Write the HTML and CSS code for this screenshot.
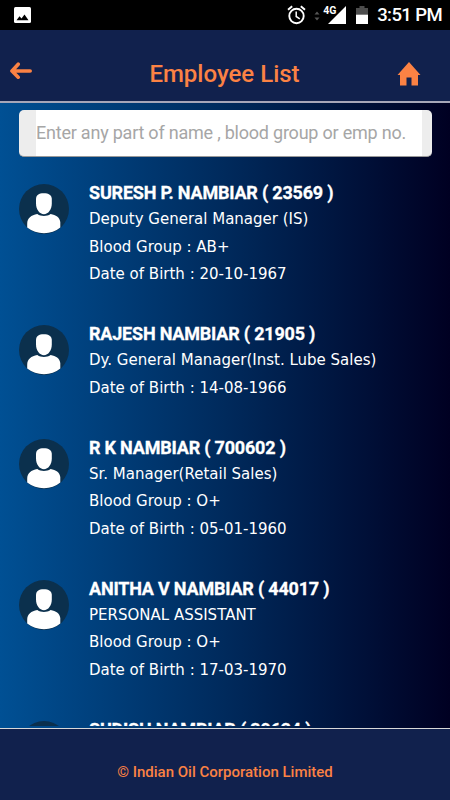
FILE: index.html
```html
<!DOCTYPE html>
<html lang="en">

<head>
    <meta charset="UTF-8">
    <meta name="viewport" content="width=device-width, initial-scale=1.0">
    <title>Employee List</title>
    <link rel="stylesheet" href="styles.css">
</head>

<body>
    <svg class="sprite" width="0" height="0">
        <symbol id="user" viewBox="0 0 50 50">
            <circle cx="25" cy="25" r="25" fill="#0b304d"/>
            <path fill="#fff" d="M17 15c0-3.700 2.800-5.700 7.700-5.700 5 0 8.100 2 8.100 5.700v4.500c0 6-3.600 10.700-7.900 10.700S17 25.500 17 19.500z"/>
            <path fill="#fff" d="M18.300 30.100c2 1.400 4.200 1.900 6.600 1.900s4.700-.5 6.700-1.900C37 31.300 40.500 33 41.300 38v5.600Q34.500 49.300 25 49.300T8.200 43.600V40c0-6 4-8.600 10.100-9.900z"/>
        </symbol>
    </svg>
    <div class="wrapper">
        <div class="status">
            <svg class="photo" width="17" height="17" viewBox="0 0 17 17">
                <rect width="17" height="16" rx="1.500" fill="#fff"/>
                <path d="M2.500 13.300l3-4 2 2.200 3-4 4 5.800z"/>
            </svg>
            <svg class="alarm" width="19" height="20" viewBox="0 0 19 20" fill="none" stroke="#fff" stroke-width="1.900">
                <circle cx="9.500" cy="11" r="7.200"/>
                <path d="M1 4.800l4.200-3.600M18 4.800l-4.200-3.600"/>
                <path d="M9.200 6.500v5l3.600 2.300" stroke-width="1.500"/>
            </svg>
            <svg class="data" width="6" height="10" viewBox="0 0 6 10" fill="#555">
                <path d="M.5 3.500L3 .5l2.500 3zM.5 6.500L3 9.500l2.500-3z"/>
            </svg>
            <div class="signal">
                <span>4G</span>
                <svg width="18" height="18" viewBox="0 0 18 18"><path d="M0 18L18 0v18z" fill="#fff"/></svg>
            </div>
            <svg class="battery" width="12" height="18" viewBox="0 0 12 18">
                <path d="M3.500 0h5v2H12v7H0V2h3.500z" fill="#4d4d4d"/>
                <path d="M0 8.700h12V18H0z" fill="#fff"/>
            </svg>
            <span class="time">3:51 PM</span>
        </div>
        <div class="header">
            <svg class="back" width="22" height="18" viewBox="0 0 22 18" fill="none" stroke="#fb8244" stroke-width="3.600" stroke-linecap="round" stroke-linejoin="round">
                <path d="M8.200 2.200L2 9l6.200 6.200M2.500 9h17.700"/>
            </svg>
            <h1>Employee List</h1>
            <svg class="home" width="24" height="24" viewBox="0 0 24 24" fill="#fb8244">
                <path d="M12 0l11.500 13H21v10.500h-6.500V15.500h-5v8H3V13H.5z"/>
            </svg>
        </div>
        <div class="content">
            <div class="search">
                <input type="text" placeholder="Enter any part of name , blood group or emp no.">
            </div>
            <ul class="list">
                <li>
                    <svg class="avatar"><use href="#user"/></svg>
                    <div class="info">
                        <h2>SURESH P. NAMBIAR ( 23569 )</h2>
                        <p>Deputy General Manager (IS)</p>
                        <p>Blood Group : AB+</p>
                        <p>Date of Birth : 20-10-1967</p>
                    </div>
                </li>
                <li>
                    <svg class="avatar"><use href="#user"/></svg>
                    <div class="info">
                        <h2>RAJESH NAMBIAR ( 21905 )</h2>
                        <p>Dy. General Manager(Inst. Lube Sales)</p>
                        <p>Date of Birth : 14-08-1966</p>
                    </div>
                </li>
                <li>
                    <svg class="avatar"><use href="#user"/></svg>
                    <div class="info">
                        <h2>R K NAMBIAR ( 700602 )</h2>
                        <p>Sr. Manager(Retail Sales)</p>
                        <p>Blood Group : O+</p>
                        <p>Date of Birth : 05-01-1960</p>
                    </div>
                </li>
                <li>
                    <svg class="avatar"><use href="#user"/></svg>
                    <div class="info">
                        <h2>ANITHA V NAMBIAR ( 44017 )</h2>
                        <p>PERSONAL ASSISTANT</p>
                        <p>Blood Group : O+</p>
                        <p>Date of Birth : 17-03-1970</p>
                    </div>
                </li>
                <li>
                    <svg class="avatar"><use href="#user"/></svg>
                    <div class="info">
                        <h2>SUDISH NAMBIAR ( 39624 )</h2>
                    </div>
                </li>
            </ul>
        </div>
        <div class="footer">© Indian Oil Corporation Limited</div>
    </div>
</body>

</html>
```
FILE: styles.css
```css
* {
    padding: 0;
    margin: 0;
    list-style: none;
    box-sizing: border-box;
}

body {
    font-family: Roboto, "Liberation Sans", sans-serif;
    color: #fff;
}

.sprite {
    display: block;
}

.wrapper {
    width: 450px;
    height: 800px;
    overflow: hidden;
    display: flex;
    flex-direction: column;
}

.status {
    flex: none;
    height: 30px;
    padding: 0 8px 0 14px;
    background-color: #000;
    display: flex;
    align-items: center;
}
.status .photo {
    margin-right: auto;
}
.status .data {
    margin: 2px 3px 0 8px;
}
.status .signal {
    display: flex;
    align-items: flex-start;
    height: 18px;
}
.status .signal span {
    font-size: 10.5px;
    line-height: 10px;
    font-weight: bold;
    width: 12px;
    margin-right: -7px;
}
.status .battery {
    margin: 0 9px 0 10px;
}
.status .time {
    padding-top: 1px;
    font-size: 18.5px;
    font-weight: 500;
    line-height: 29px;
    letter-spacing: -0.6px;
}

.header {
    flex: none;
    height: 73px;
    padding: 0 29px 0 10px;
    background-color: #11214d;
    border-bottom: 2px solid #a6a6b8;
    display: flex;
    align-items: flex-start;
    justify-content: space-between;
}
.header .back {
    margin-top: 32px;
}
.header h1 {
    margin-top: 29px;
    padding-left: 20px;
    font-size: 24px;
    line-height: 30px;
    font-weight: 500;
    color: #fb8244;
}
.header .home {
    margin-top: 31.5px;
}

.content {
    height: 625px;
    padding: 7px 18px 2px 19px;
    overflow: hidden;
    display: flex;
    flex-direction: column;
    background: linear-gradient(to right, #005094, #002a5c 50%, #000022);
}
.content .search {
    flex: none;
    height: 47px;
    padding: 0 10px 0 17px;
    border-radius: 5px;
    border-bottom: 1px solid #999;
    background-color: #ededed;
}
.content .search input {
    display: block;
    width: 100%;
    height: 46px;
    padding-bottom: 2px;
    border: 0;
    outline: none;
    background-color: #fff;
    font-family: Roboto, sans-serif;
    font-size: 18px;
    letter-spacing: -0.22px;
}
.content .search input::placeholder {
    color: #a6a6a6;
}

.list {
    flex: 1;
    min-height: 0;
    margin-top: 24px;
    overflow: hidden;
}
.list li {
    display: flex;
    padding-bottom: 33.5px;
}
.list .avatar {
    flex: none;
    width: 50px;
    height: 50px;
    margin: 3px 20px 0 0;
}
.list h2 {
    padding-bottom: 2px;
    font-size: 18px;
    line-height: 23px;
    font-weight: bold;
    letter-spacing: -0.2px;
    white-space: nowrap;
    -webkit-text-stroke: 0.3px #fff;
}
.list p {
    font-family: "DejaVu Sans", sans-serif;
    font-size: 15px;
    line-height: 27.5px;
    white-space: nowrap;
}

.footer {
    flex: none;
    height: 72px;
    padding-top: 14px;
    border-top: 1px solid #d8d8d8;
    background-color: #11214d;
    font-size: 15px;
    line-height: 58px;
    font-weight: 500;
    text-align: center;
    color: #fb8244;
}
```
